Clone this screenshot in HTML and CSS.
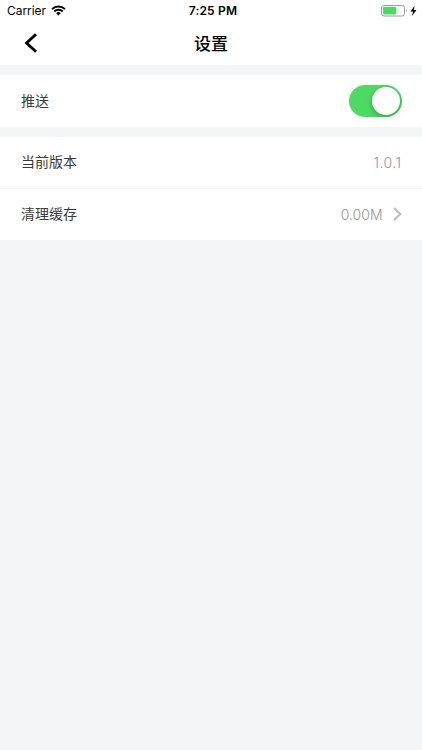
FILE: index.html
```html
<!DOCTYPE html>
<html lang="zh-CN">
<head>
<meta charset="utf-8">
<title>设置</title>
<link rel="stylesheet" href="styles.css">
</head>
<body>
<header class="header">
  <div class="status">
    <div class="carrier">
      <span>Carrier</span>
      <svg class="wifi" width="15" height="11" viewBox="0 0 15 11">
        <path d="M1 4.1a9.3 9.3 0 0 1 13 0M3.3 6.5a6 6 0 0 1 8.4 0" fill="none" stroke="#000" stroke-width="1.9"/>
        <path d="M5.2 8.2a3.3 3.3 0 0 1 4.6 0L7.5 10.6z"/>
      </svg>
    </div>
    <time class="time">7:25 PM</time>
    <svg class="battery" width="36" height="12" viewBox="0 0 36 12">
      <rect x=".5" y=".6" width="23" height="10.4" rx="2.5" fill="#fff" stroke="#999"/>
      <rect x="2" y="2.1" width="13.3" height="7.4" rx="1" fill="#4cd964"/>
      <path d="M25 4.1q1.5 1.7 0 3.4z" fill="#888"/>
      <path d="M33.7.8 29.4 6.4h2.7l-1.2 4.5 4.6-5.8h-2.8z"/>
    </svg>
  </div>
  <nav class="nav">
    <svg class="back" width="14" height="20" viewBox="0 0 14 20">
      <path d="M12 1.2 2.6 10l9.4 8.8" fill="none" stroke="#000" stroke-width="2.9"/>
    </svg>
    <h1 class="title">设置</h1>
  </nav>
</header>
<main>
  <section class="group">
    <div class="row"><span class="label">推送</span><span class="switch"><span class="knob"></span></span></div>
  </section>
  <section class="group">
    <div class="row"><span class="label">当前版本</span><span class="value version">1.0.1</span></div>
    <div class="row divided"><span class="label">清理缓存</span>
      <span class="value">0.00M
        <svg class="chevron" width="9" height="14" viewBox="0 0 9 14"><path d="m1 1 6.4 6L1 13" fill="none" stroke="#bbb" stroke-width="1.9"/></svg>
      </span>
    </div>
  </section>
</main>
</body>
</html>
```
FILE: styles.css
```css
* { box-sizing: border-box; }
body {
  margin: 0;
  min-height: 750px;
  background: #f3f5f7;
  color: #3a3a3a;
  font-family: Inter, "Noto Sans CJK SC", sans-serif;
}
.header { height: 65.4px; background: #fff; color: #000; }
.status {
  display: grid;
  grid-template-columns: 1fr auto 1fr;
  align-items: center;
  height: 21px;
  padding: 0 5px 0 7px;
  font-size: 12px;
}
.carrier { display: flex; align-items: center; gap: 5px; letter-spacing: -.05px; }
.time { font-weight: 600; letter-spacing: .2px; padding-left: 2px; }
.battery { justify-self: end; }
.nav {
  display: grid;
  grid-template-columns: 1fr auto 1fr;
  align-items: center;
  height: 43px;
  padding: 0 24px;
}
.title { margin: 0; font: 500 17px/24px "Noto Sans CJK SC", sans-serif; }
.group { margin-top: 10px; background: #fff; }
.row {
  display: flex;
  align-items: center;
  justify-content: space-between;
  height: 51.4px;
  padding: 0 20.5px 0 21px;
  font-family: "Noto Sans CJK SC", sans-serif;
  font-size: 14px;
}
.label { padding-bottom: 2px; }
.divided { border-top: 1px solid #f3f5f7; }
.value {
  display: flex;
  align-items: center;
  gap: 10px;
  color: #949494;
  font-family: Inter, sans-serif;
  font-weight: 300;
}
.version { letter-spacing: .45px; }
.switch {
  width: 52.5px;
  height: 32px;
  padding: 2px;
  border-radius: 16px;
  background: #4cd964;
}
.knob {
  display: block;
  width: 28px;
  height: 28px;
  margin-left: auto;
  border-radius: 50%;
  background: #fff;
  box-shadow: 0 2px 5px rgba(0, 0, 0, .28);
}
```
